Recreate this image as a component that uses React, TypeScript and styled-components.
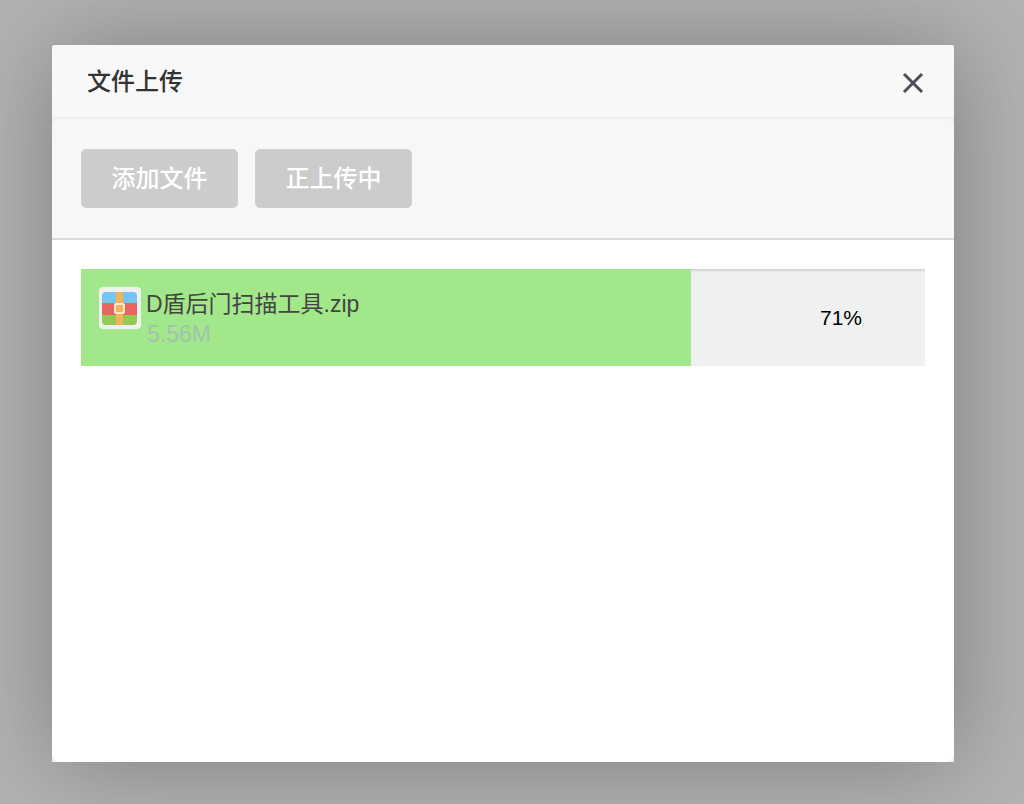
import React from 'react';
import styled, { createGlobalStyle } from 'styled-components';

const GlobalStyle = createGlobalStyle`
  * {
    box-sizing: border-box;
  }
  body {
    margin: 0;
    background: #b3b3b3;
    font-family: 'Liberation Sans', 'Noto Sans CJK SC', sans-serif;
    color: #333;
  }
`;

const Backdrop = styled.main`
  display: flex;
  min-height: 100vh;
  padding: 45px 70px 42px 52px;
  overflow: hidden;
`;

const Dialog = styled.section`
  flex: 1;
  display: flex;
  flex-direction: column;
  background: #eee;
  border-radius: 3px 3px 0 0;
  box-shadow: 2px 2px 100px rgba(0, 0, 0, 0.3);
`;

const Header = styled.header`
  display: flex;
  align-items: center;
  justify-content: space-between;
  height: 74px;
  padding: 2px 30px 0 35px;
  border-bottom: 2px solid #eee;
  border-radius: 3px 3px 0 0;
  background: #f8f8f8;
`;

const Title = styled.h1`
  margin: 0;
  font-size: 24px;
  line-height: 36px;
  font-weight: 500;
`;

const CloseButton = styled.button`
  display: flex;
  margin-top: 2px;
  padding: 0;
  border: 0;
  background: none;
  color: #4d4c57;
  cursor: pointer;
`;

const Body = styled.div`
  flex: 1;
  display: flex;
  flex-direction: column;
  border-radius: 8px;
  background: #fff;
  overflow: hidden;
`;

const Toolbar = styled.div`
  display: flex;
  gap: 17px;
  padding: 30px 29px;
  background: #f7f7f7;
  border-bottom: 2px solid #d9d9d9;
`;

const ActionButton = styled.button`
  width: 157px;
  height: 59px;
  padding: 0;
  border: 1px solid #d0d0d0;
  border-radius: 5px;
  background: #ccc;
  color: #fff;
  font-family: inherit;
  font-size: 24px;
  line-height: 36px;
  font-weight: 500;
`;

const FileList = styled.ul`
  margin: 0;
  padding: 29px;
  list-style: none;
`;

const FileRow = styled.li`
  position: relative;
  display: flex;
  align-items: center;
  justify-content: space-between;
  height: 97px;
  padding: 0 63px 0 18px;
  background: #eff0f0;
  box-shadow: inset 0 4px 3px -3px rgba(0, 0, 0, 0.2);
`;

const Progress = styled.div`
  position: absolute;
  inset: 0 auto 0 0;
  box-sizing: content-box;
  padding-right: 11px;
  background: #a2e88a;
`;

const FileInfo = styled.div`
  position: relative;
  display: flex;
  gap: 5px;
`;

const FileText = styled.div`
  padding-top: 2px;
`;

const FileName = styled.div`
  color: #444;
  font-size: 23px;
  line-height: 30px;
`;

const FileSize = styled.div`
  padding-left: 1px;
  color: #a3c2b1;
  font-size: 23px;
  line-height: 30px;
`;

const Percent = styled.span`
  position: relative;
  color: #000;
  font-size: 21px;
  line-height: 30px;
`;

const CloseIcon = () => (
  <svg width="22" height="22" viewBox="0 0 22 22" aria-hidden="true">
    <path d="M2 2L20 20M20 2L2 20" fill="none" stroke="currentColor" strokeWidth="3" />
  </svg>
);

const ZipIcon = () => (
  <svg width="42" height="42" viewBox="0 0 42 42" aria-hidden="true">
    <rect width="42" height="42" rx="4" fill="#f0f1ee" />
    <path d="M3 16V9Q3 5 7 5H34Q38 5 38 9V16Z" fill="#75c5f2" />
    <path d="M3 16H38V28H3Z" fill="#e8665f" />
    <path d="M3 28H38V34Q38 38 34 38H7Q3 38 3 34Z" fill="#91ca54" />
    <path d="M17 5H24V38H17Z" fill="#f5b25a" />
    <rect x="16" y="17" width="9" height="9" rx="1" fill="#f5b25a" stroke="#fcebd3" strokeWidth="2" />
  </svg>
);

const files = [{ name: 'D盾后门扫描工具.zip', size: '5.56M', progress: 71 }];

export default function App() {
  return (
    <>
      <GlobalStyle />
      <Backdrop>
        <Dialog role="dialog" aria-labelledby="upload-title">
          <Header>
            <Title id="upload-title">文件上传</Title>
            <CloseButton type="button" aria-label="关闭">
              <CloseIcon />
            </CloseButton>
          </Header>
          <Body>
            <Toolbar>
              <ActionButton type="button">添加文件</ActionButton>
              <ActionButton type="button">正上传中</ActionButton>
            </Toolbar>
            <FileList>
              {files.map((file) => (
                <FileRow key={file.name}>
                  <Progress
                    role="progressbar"
                    aria-label={file.name}
                    aria-valuenow={file.progress}
                    style={{ width: `${file.progress}%` }}
                  />
                  <FileInfo>
                    <ZipIcon />
                    <FileText>
                      <FileName>{file.name}</FileName>
                      <FileSize>{file.size}</FileSize>
                    </FileText>
                  </FileInfo>
                  <Percent>{file.progress}%</Percent>
                </FileRow>
              ))}
            </FileList>
          </Body>
        </Dialog>
      </Backdrop>
    </>
  );
}
